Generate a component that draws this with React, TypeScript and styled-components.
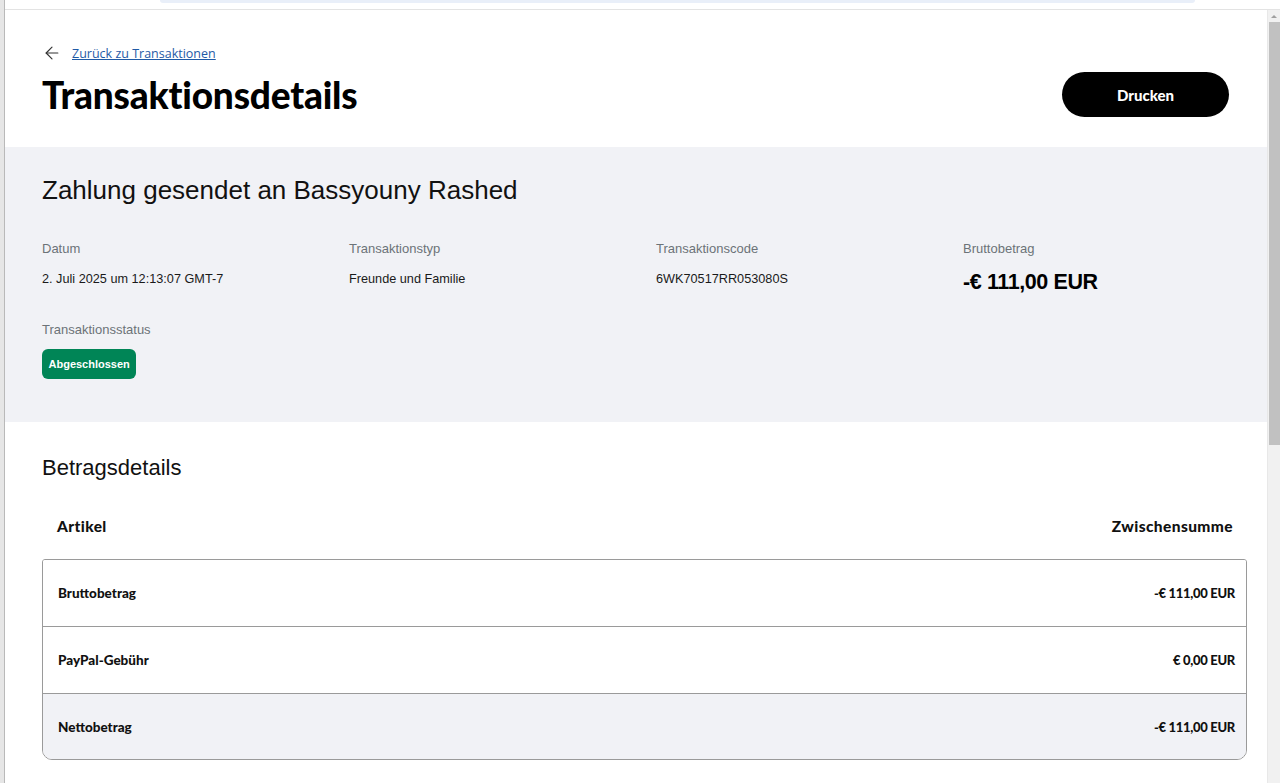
import { ArrowLeft } from "lucide-react";
import styled, { createGlobalStyle } from "styled-components";

const GlobalStyle = createGlobalStyle`
  html, body {
    margin: 0;
    padding: 0;
    background: #ffffff;
    font-family: "Liberation Sans", Arial, sans-serif;
    color: #1a1a1a;
  }
  * { box-sizing: border-box; }
`;

const Frame = styled.div`
  display: flex;
  width: 1280px;
  height: 783px;
  overflow: hidden;
`;

const SideStrip = styled.div`
  width: 5px;
  flex-shrink: 0;
  background: #e6e6e6;
  border-right: 1px solid #b9b9b9;
`;

const Column = styled.div`
  flex: 1;
  display: flex;
  flex-direction: column;
  min-width: 0;
`;

const TopBar = styled.div`
  height: 10px;
  flex-shrink: 0;
  border-bottom: 1px solid #e3e3e3;
  background: #ffffff;
`;

const AddressHint = styled.div`
  margin-left: 155px;
  width: 1035px;
  height: 3px;
  background: #e9eff9;
  border-radius: 0 0 3px 3px;
`;

const Body = styled.div`
  flex: 1;
  display: flex;
  min-height: 0;
`;

const Page = styled.main`
  flex: 1;
  overflow: hidden;
  background: #ffffff;
`;

const Scrollbar = styled.div`
  width: 13px;
  flex-shrink: 0;
  background: #f1f1f1;
  display: flex;
  flex-direction: column;
  align-items: center;
  border-left: 1px solid #e8e8e8;
`;

const ScrollArrow = styled.div`
  margin-top: 5px;
  width: 0;
  height: 0;
  border-left: 3px solid transparent;
  border-right: 3px solid transparent;
  border-bottom: 3px solid #a0a0a0;
`;

const ScrollThumb = styled.div`
  margin-top: 4px;
  width: 11px;
  height: 423px;
  background: #c1c1c1;
`;

const Header = styled.header`
  padding: 33px 38px 30px 37px;
`;

const BackLink = styled.a`
  display: inline-flex;
  align-items: center;
  gap: 10px;
  height: 20px;
  color: #1f5aa6;
  font-family: "Open Sans", sans-serif;
  font-size: 12.5px;
  text-decoration: underline;
  cursor: pointer;

  svg {
    color: #333333;
  }
`;

const TitleRow = styled.div`
  display: flex;
  align-items: center;
  justify-content: space-between;
  margin-top: 5px;
`;

const Title = styled.h1`
  margin: 0;
  font-family: Lato, sans-serif;
  font-weight: 900;
  font-size: 37px;
  line-height: 44px;
  letter-spacing: -0.2px;
  color: #000000;
`;

const PrintButton = styled.button`
  width: 167px;
  height: 45px;
  border: 0;
  border-radius: 23px;
  background: #000000;
  color: #ffffff;
  font-family: Lato, sans-serif;
  font-weight: 900;
  font-size: 15px;
  cursor: pointer;
`;

const Summary = styled.section`
  background: #f1f2f6;
  padding: 28px 20px 43px 37px;
`;

const SummaryTitle = styled.h2`
  margin: 0;
  font-weight: 400;
  font-size: 26px;
  line-height: 30px;
  color: #111111;
`;

const FieldGrid = styled.div`
  display: grid;
  grid-template-columns: repeat(3, 307px) 1fr;
  row-gap: 28px;
  margin-top: 36px;
`;

const Field = styled.div`
  display: flex;
  flex-direction: column;
  align-items: flex-start;
  gap: 10px;
`;

const FieldLabel = styled.span`
  font-size: 13px;
  line-height: 16px;
  color: #6c7378;
`;

const FieldValue = styled.span<{ $big?: boolean }>`
  font-size: ${({ $big }) => ($big ? "21.5px" : "12.7px")};
  font-weight: ${({ $big }) => ($big ? 700 : 400)};
  line-height: 24px;
  padding-top: ${({ $big }) => ($big ? "3px" : "0")};
  color: ${({ $big }) => ($big ? "#000000" : "#1a1a1a")};
  letter-spacing: ${({ $big }) => ($big ? "-0.4px" : "0")};
`;

const StatusBadge = styled.span`
  display: inline-flex;
  align-items: center;
  height: 30px;
  padding: 0 6.5px;
  margin-top: 1px;
  border-radius: 6px;
  background: #008556;
  color: #ffffff;
  font-size: 11px;
  font-weight: 700;
`;

const Amounts = styled.section`
  padding: 33px 20px 24px 37px;
`;

const AmountsTitle = styled.h2`
  margin: 0;
  font-weight: 400;
  font-size: 22px;
  line-height: 26px;
  color: #111111;
`;

const TableHead = styled.div`
  display: flex;
  justify-content: space-between;
  align-items: center;
  height: 44px;
  margin-top: 23px;
  margin-bottom: 11px;
  padding: 0 14px 0 15px;
  font-family: Lato, sans-serif;
  font-weight: 900;
  font-size: 15.5px;
  letter-spacing: 0.4px;
  color: #111111;
`;

const TableBox = styled.div`
  border: 1px solid #9a9a9a;
  border-radius: 3px 3px 10px 10px;
  overflow: hidden;
`;

const TableRow = styled.div<{ $shaded?: boolean }>`
  display: flex;
  justify-content: space-between;
  align-items: center;
  height: 66px;
  padding: 0 11px 0 15px;
  background: ${({ $shaded }) => ($shaded ? "#f1f2f6" : "#ffffff")};
  font-family: Lato, sans-serif;
  font-weight: 900;
  font-size: 13.5px;
  color: #111111;

  & + & {
    height: 67px;
    border-top: 1px solid #9a9a9a;
  }

  &:last-child {
    height: 66px;
  }
`;

const RowValue = styled.span`
  font-size: 13px;
  letter-spacing: -0.3px;
`;

const details = [
  { label: "Datum", value: "2. Juli 2025 um 12:13:07 GMT-7" },
  { label: "Transaktionstyp", value: "Freunde und Familie" },
  { label: "Transaktionscode", value: "6WK70517RR053080S" },
];

const rows = [
  { label: "Bruttobetrag", value: "-€ 111,00 EUR" },
  { label: "PayPal-Gebühr", value: "€ 0,00 EUR" },
  { label: "Nettobetrag", value: "-€ 111,00 EUR", shaded: true },
];

export default function App() {
  return (
    <>
      <GlobalStyle />
      <Frame>
        <SideStrip />
        <Column>
          <TopBar>
            <AddressHint />
          </TopBar>
          <Body>
            <Page>
              <Header>
                <BackLink>
                  <ArrowLeft size={20} strokeWidth={1.4} />
                  Zurück zu Transaktionen
                </BackLink>
                <TitleRow>
                  <Title>Transaktionsdetails</Title>
                  <PrintButton>Drucken</PrintButton>
                </TitleRow>
              </Header>

              <Summary>
                <SummaryTitle>Zahlung gesendet an Bassyouny Rashed</SummaryTitle>
                <FieldGrid>
                  {details.map((d) => (
                    <Field key={d.label}>
                      <FieldLabel>{d.label}</FieldLabel>
                      <FieldValue>{d.value}</FieldValue>
                    </Field>
                  ))}
                  <Field>
                    <FieldLabel>Bruttobetrag</FieldLabel>
                    <FieldValue $big>-€ 111,00 EUR</FieldValue>
                  </Field>
                  <Field>
                    <FieldLabel>Transaktionsstatus</FieldLabel>
                    <StatusBadge>Abgeschlossen</StatusBadge>
                  </Field>
                </FieldGrid>
              </Summary>

              <Amounts>
                <AmountsTitle>Betragsdetails</AmountsTitle>
                <TableHead>
                  <span>Artikel</span>
                  <span>Zwischensumme</span>
                </TableHead>
                <TableBox>
                  {rows.map((r) => (
                    <TableRow key={r.label} $shaded={r.shaded}>
                      <span>{r.label}</span>
                      <RowValue>{r.value}</RowValue>
                    </TableRow>
                  ))}
                </TableBox>
              </Amounts>
            </Page>
            <Scrollbar>
              <ScrollArrow />
              <ScrollThumb />
            </Scrollbar>
          </Body>
        </Column>
      </Frame>
    </>
  );
}
